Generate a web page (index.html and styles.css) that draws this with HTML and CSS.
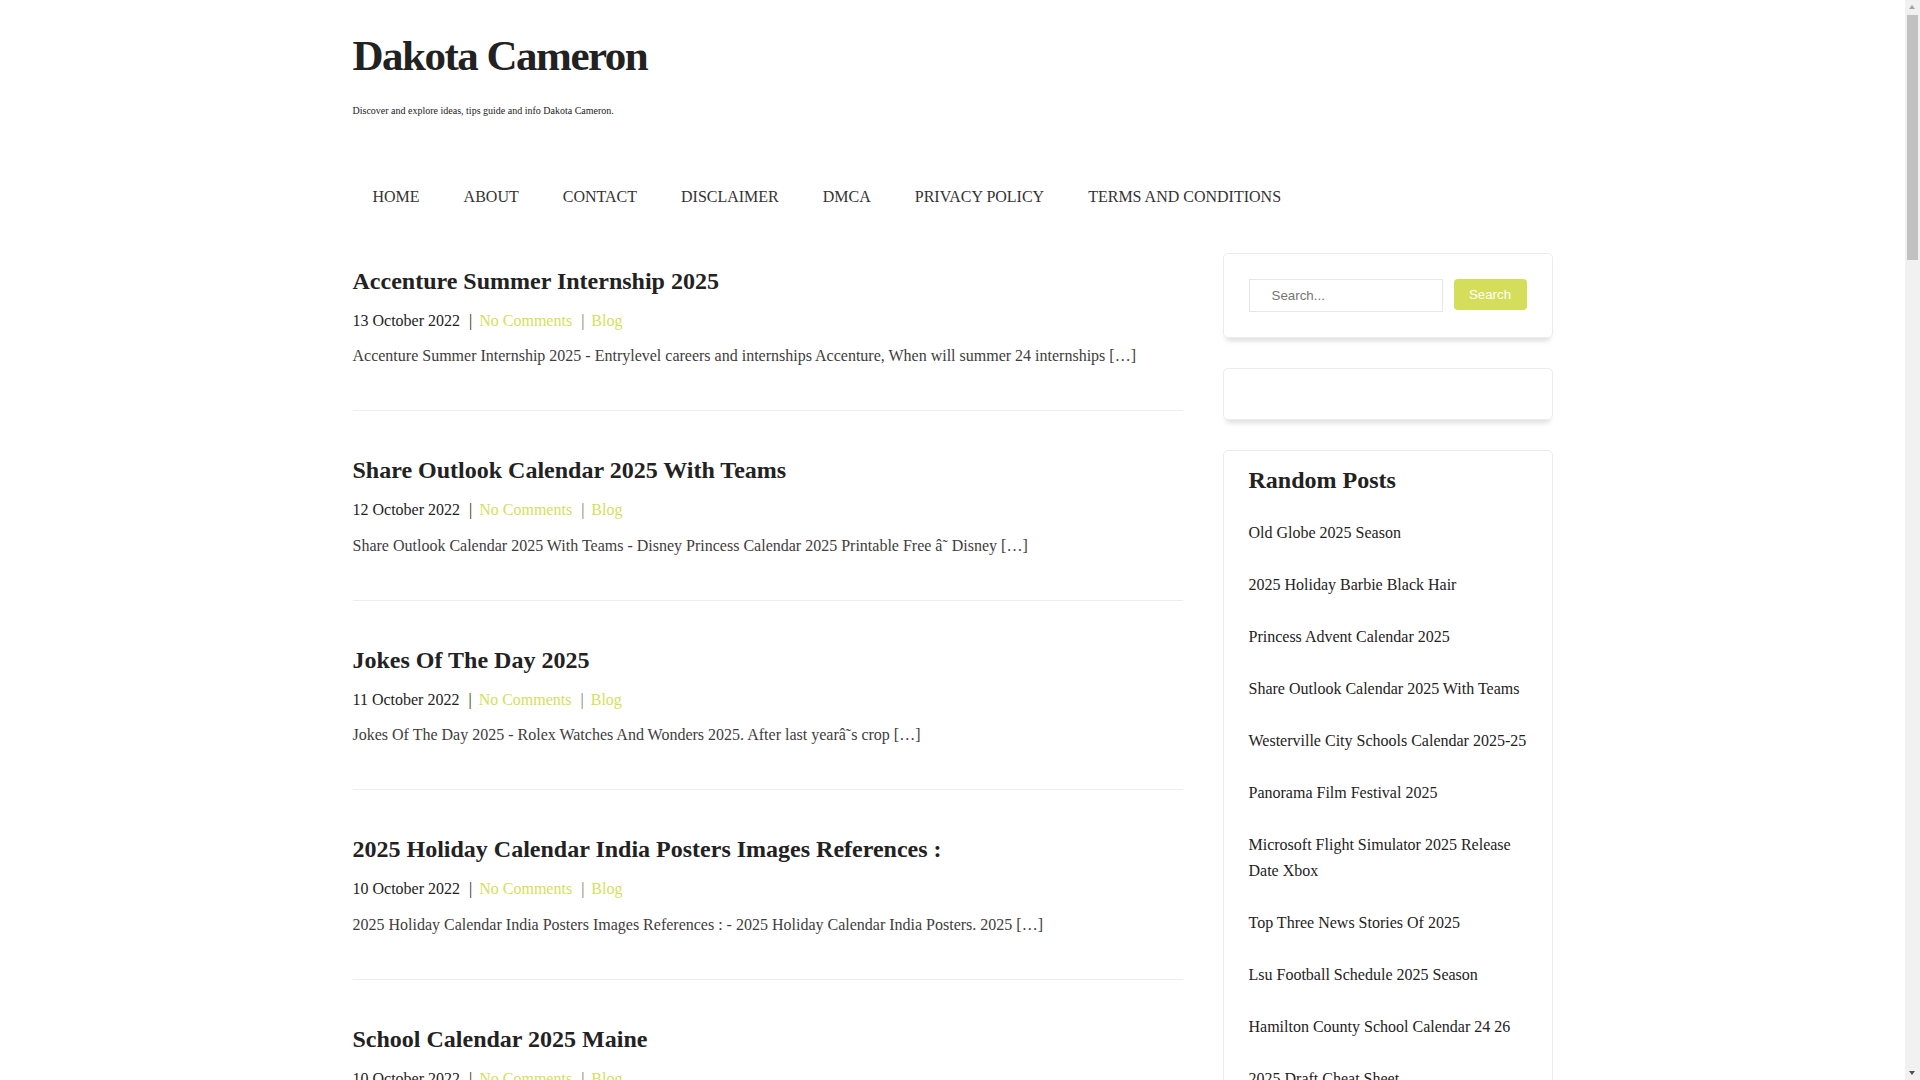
FILE: index.html
```html
<!doctype html>

<html lang="en">

<head>
  <meta charset="utf-8">
  <title>Dakota Cameron</title>
  <meta name="description" content="Discover and explore ideas, tips guide and info Dakota Cameron.">
  <link rel="stylesheet" href="styles.css">
</head>

<body>
  <div class="wrap">
    <header class="site-header">
      <h1 class="site-title">Dakota Cameron</h1>
      <p class="site-desc">Discover and explore ideas, tips guide and info Dakota Cameron.</p>
      <nav class="main-nav">
        <a href="#">HOME</a>
        <a href="#">ABOUT</a>
        <a href="#">CONTACT</a>
        <a href="#">DISCLAIMER</a>
        <a href="#">DMCA</a>
        <a href="#">PRIVACY POLICY</a>
        <a href="#">TERMS AND CONDITIONS</a>
      </nav>
    </header>

    <div class="content">
      <main class="posts">
        <article class="post">
          <h2 class="post-title">Accenture Summer Internship 2025</h2>
          <div class="post-meta">13 October 2022<span class="sep">|</span><a href="#">No Comments</a><span class="sep light">|</span><a href="#">Blog</a></div>
          <p class="excerpt">Accenture Summer Internship 2025 - Entrylevel careers and internships Accenture, When will summer 24 internships […]</p>
        </article>
        <article class="post">
          <h2 class="post-title">Share Outlook Calendar 2025 With Teams</h2>
          <div class="post-meta">12 October 2022<span class="sep">|</span><a href="#">No Comments</a><span class="sep light">|</span><a href="#">Blog</a></div>
          <p class="excerpt">Share Outlook Calendar 2025 With Teams - Disney Princess Calendar 2025 Printable Free â˜ Disney […]</p>
        </article>
        <article class="post">
          <h2 class="post-title">Jokes Of The Day 2025</h2>
          <div class="post-meta">11 October 2022<span class="sep">|</span><a href="#">No Comments</a><span class="sep light">|</span><a href="#">Blog</a></div>
          <p class="excerpt">Jokes Of The Day 2025 - Rolex Watches And Wonders 2025. After last yearâ˜s crop […]</p>
        </article>
        <article class="post">
          <h2 class="post-title">2025 Holiday Calendar India Posters Images References :</h2>
          <div class="post-meta">10 October 2022<span class="sep">|</span><a href="#">No Comments</a><span class="sep light">|</span><a href="#">Blog</a></div>
          <p class="excerpt">2025 Holiday Calendar India Posters Images References : - 2025 Holiday Calendar India Posters. 2025 […]</p>
        </article>
        <article class="post">
          <h2 class="post-title">School Calendar 2025 Maine</h2>
          <div class="post-meta">10 October 2022<span class="sep">|</span><a href="#">No Comments</a><span class="sep light">|</span><a href="#">Blog</a></div>
          <p class="excerpt">School Calendar 2025 Maine - Maine School Calendar 2025 and 2026 Holidays, dates and breaks […]</p>
        </article>
        <article class="post">
          <h2 class="post-title">Old Globe 2025 Season</h2>
          <div class="post-meta">9 October 2022<span class="sep">|</span><a href="#">No Comments</a><span class="sep light">|</span><a href="#">Blog</a></div>
          <p class="excerpt">Old Globe 2025 Season - The Old Globe announces full lineup for the new season […]</p>
        </article>
        <article class="post">
          <h2 class="post-title">2025 Holiday Barbie Black Hair</h2>
          <div class="post-meta">9 October 2022<span class="sep">|</span><a href="#">No Comments</a><span class="sep light">|</span><a href="#">Blog</a></div>
          <p class="excerpt">2025 Holiday Barbie Black Hair - Holiday Barbie Doll 2025, Red Dress. The collectible […]</p>
        </article>
        <article class="post">
          <h2 class="post-title">Princess Advent Calendar 2025</h2>
          <div class="post-meta">8 October 2022<span class="sep">|</span><a href="#">No Comments</a><span class="sep light">|</span><a href="#">Blog</a></div>
          <p class="excerpt">Princess Advent Calendar 2025 - Disney Princess Advent Calendar with 24 surprises […]</p>
        </article>
        <article class="post">
          <h2 class="post-title">Westerville City Schools Calendar 2025-25</h2>
          <div class="post-meta">8 October 2022<span class="sep">|</span><a href="#">No Comments</a><span class="sep light">|</span><a href="#">Blog</a></div>
          <p class="excerpt">Westerville City Schools Calendar 2025-25 - District calendar, first day of school and breaks […]</p>
        </article>
        <article class="post">
          <h2 class="post-title">Panorama Film Festival 2025</h2>
          <div class="post-meta">7 October 2022<span class="sep">|</span><a href="#">No Comments</a><span class="sep light">|</span><a href="#">Blog</a></div>
          <p class="excerpt">Panorama Film Festival 2025 - Program, venues and tickets for the festival week […]</p>
        </article>
        <article class="post">
          <h2 class="post-title">Microsoft Flight Simulator 2025 Release Date Xbox</h2>
          <div class="post-meta">7 October 2022<span class="sep">|</span><a href="#">No Comments</a><span class="sep light">|</span><a href="#">Blog</a></div>
          <p class="excerpt">Microsoft Flight Simulator 2025 Release Date Xbox - Everything we know so far about the launch […]</p>
        </article>
        <article class="post">
          <h2 class="post-title">Top Three News Stories Of 2025</h2>
          <div class="post-meta">6 October 2022<span class="sep">|</span><a href="#">No Comments</a><span class="sep light">|</span><a href="#">Blog</a></div>
          <p class="excerpt">Top Three News Stories Of 2025 - The biggest headlines of the year in review […]</p>
        </article>
        <article class="post">
          <h2 class="post-title">Lsu Football Schedule 2025 Season</h2>
          <div class="post-meta">6 October 2022<span class="sep">|</span><a href="#">No Comments</a><span class="sep light">|</span><a href="#">Blog</a></div>
          <p class="excerpt">Lsu Football Schedule 2025 Season - Tigers home and away games, kickoff times […]</p>
        </article>
        <article class="post">
          <h2 class="post-title">Hamilton County School Calendar 24 26</h2>
          <div class="post-meta">5 October 2022<span class="sep">|</span><a href="#">No Comments</a><span class="sep light">|</span><a href="#">Blog</a></div>
          <p class="excerpt">Hamilton County School Calendar 24 26 - Approved school year calendar and holidays […]</p>
        </article>
        <article class="post">
          <h2 class="post-title">2025 Draft Cheat Sheet</h2>
          <div class="post-meta">5 October 2022<span class="sep">|</span><a href="#">No Comments</a><span class="sep light">|</span><a href="#">Blog</a></div>
          <p class="excerpt">2025 Draft Cheat Sheet - Printable rankings by position for your fantasy draft […]</p>
        </article>
        <article class="post">
          <h2 class="post-title">Christmas Tree Lighting 2025</h2>
          <div class="post-meta">4 October 2022<span class="sep">|</span><a href="#">No Comments</a><span class="sep light">|</span><a href="#">Blog</a></div>
          <p class="excerpt">Christmas Tree Lighting 2025 - Dates and times of the tree lighting ceremonies […]</p>
        </article>
        <article class="post">
          <h2 class="post-title">Uk Bank Holidays 2025 Calendar</h2>
          <div class="post-meta">4 October 2022<span class="sep">|</span><a href="#">No Comments</a><span class="sep light">|</span><a href="#">Blog</a></div>
          <p class="excerpt">Uk Bank Holidays 2025 Calendar - England, Wales, Scotland and Northern Ireland […]</p>
        </article>
        <article class="post">
          <h2 class="post-title">Nfl Playoff Bracket 2025 Printable</h2>
          <div class="post-meta">3 October 2022<span class="sep">|</span><a href="#">No Comments</a><span class="sep light">|</span><a href="#">Blog</a></div>
          <p class="excerpt">Nfl Playoff Bracket 2025 Printable - Free printable bracket for the postseason […]</p>
        </article>
        <article class="post">
          <h2 class="post-title">Chinese New Year 2025 Animal</h2>
          <div class="post-meta">3 October 2022<span class="sep">|</span><a href="#">No Comments</a><span class="sep light">|</span><a href="#">Blog</a></div>
          <p class="excerpt">Chinese New Year 2025 Animal - Year of the Snake meaning and traditions […]</p>
        </article>
        <article class="post">
          <h2 class="post-title">Ramadan 2025 Calendar Usa</h2>
          <div class="post-meta">2 October 2022<span class="sep">|</span><a href="#">No Comments</a><span class="sep light">|</span><a href="#">Blog</a></div>
          <p class="excerpt">Ramadan 2025 Calendar Usa - Sehri and iftar timings for major cities […]</p>
        </article>
        <div class="pager"><a href="#">Next Page »</a></div>
      </main>

      <aside class="sidebar">
        <div class="widget">
          <form class="search-form">
            <input type="search" placeholder="Search...">
            <button type="button">Search</button>
          </form>
        </div>
        <div class="widget"></div>
        <div class="widget random">
          <h3 class="widget-title">Random Posts</h3>
          <ul class="random-list">
            <li><a href="#">Old Globe 2025 Season</a></li>
            <li><a href="#">2025 Holiday Barbie Black Hair</a></li>
            <li><a href="#">Princess Advent Calendar 2025</a></li>
            <li><a href="#">Share Outlook Calendar 2025 With Teams</a></li>
            <li><a href="#">Westerville City Schools Calendar 2025-25</a></li>
            <li><a href="#">Panorama Film Festival 2025</a></li>
            <li><a href="#">Microsoft Flight Simulator 2025 Release Date Xbox</a></li>
            <li><a href="#">Top Three News Stories Of 2025</a></li>
            <li><a href="#">Lsu Football Schedule 2025 Season</a></li>
            <li><a href="#">Hamilton County School Calendar 24 26</a></li>
            <li><a href="#">2025 Draft Cheat Sheet</a></li>
            <li><a href="#">Christmas Tree Lighting 2025</a></li>
            <li><a href="#">Uk Bank Holidays 2025 Calendar</a></li>
            <li><a href="#">Nfl Playoff Bracket 2025 Printable</a></li>
            <li><a href="#">Chinese New Year 2025 Animal</a></li>
          </ul>
        </div>
      </aside>
    </div>

    <footer class="site-footer">Copyright © 2022 Dakota Cameron. All rights reserved.</footer>
  </div>

  <!-- window scrollbar as seen in the capture -->
  <div class="fake-scroll">
    <span class="arrow up"></span>
    <span class="thumb"></span>
    <span class="arrow down"></span>
  </div>
</body>

</html>
```

FILE: styles.css
```css
body {
  margin: 0;
  padding-right: 15px;
  background: #fff;
  color: #222;
  font-family: "Liberation Serif", "Times New Roman", serif;
  font-size: 16px;
}
a {
  color: inherit;
  text-decoration: none;
}
.wrap {
  width: 1200px;
  margin: 0 auto;
}

/* header */
.site-header {
  padding-top: 30px;
}
.site-title {
  margin: 0;
  font-size: 43px;
  line-height: 1.2;
  letter-spacing: -1.5px;
  font-weight: bold;
  color: #222;
}
.site-desc {
  margin: 21px 0 0;
  font-size: 10px;
  line-height: 15px;
}
.main-nav {
  display: flex;
  gap: 4px;
  margin-top: 67px;
  line-height: 24px;
}
.main-nav a {
  padding: 0 20px;
  color: #333;
}

/* layout */
.content {
  display: grid;
  grid-template-columns: 830px 330px;
  gap: 40px;
  align-items: start;
  margin-top: 44px;
}

/* posts */
.posts {
  padding-top: 10px;
}
.post {
  padding-bottom: 42px;
  margin-bottom: 41px;
  border-bottom: 1px solid #ededed;
}
.post-title {
  margin: 0 0 10px;
  font-size: 24px;
  line-height: 36px;
  font-weight: bold;
  color: #222;
}
.post-meta {
  line-height: 24px;
  margin-bottom: 11.5px;
  color: #222;
}
.post-meta a {
  color: #d3df5c;
}
.post-meta .sep {
  margin: 0 7px 0 9px;
}
.post-meta .sep.light {
  color: #777;
}
.excerpt {
  margin: 0;
  line-height: 24px;
  color: #3d3d3d;
}
.pager {
  padding-bottom: 40px;
}
.pager a {
  color: #d3df5c;
}

/* sidebar */
.widget {
  border: 1px solid #ececec;
  border-radius: 5px;
  padding: 25px;
  margin-bottom: 30px;
  background: #fff;
  box-shadow: 0 6px 5px -3px rgba(0, 0, 0, 0.13);
}
.widget.random {
  padding-top: 15px;
}
.search-form {
  display: flex;
  gap: 11px;
  align-items: flex-start;
}
.search-form input {
  flex: 1;
  min-width: 0;
  box-sizing: border-box;
  height: 33px;
  padding: 0 22px;
  border: 1px solid #e6e6e6;
  font-family: "Liberation Sans", Arial, sans-serif;
  font-size: 13.33px;
  color: #333;
  outline: none;
}
.search-form input::placeholder {
  color: #757575;
}
.search-form button {
  width: 73px;
  height: 31px;
  border: none;
  border-radius: 4px;
  background: #d4de5a;
  color: #fff;
  font-family: "Liberation Sans", Arial, sans-serif;
  font-size: 13.33px;
}
.widget-title {
  margin: 0 0 13px;
  font-size: 24px;
  line-height: 1.2;
  font-weight: bold;
  color: #222;
}
.random-list {
  list-style: none;
  margin: 0;
  padding: 0;
}
.random-list li {
  padding: 13px 0;
  line-height: 26px;
}

.site-footer {
  padding: 30px 0 40px;
  border-top: 1px solid #ededed;
  font-size: 14px;
  color: #555;
}

/* scrollbar overlay */
.fake-scroll {
  position: fixed;
  top: 0;
  right: 0;
  width: 15px;
  height: 100vh;
  background: #f1f1f1;
}
.fake-scroll .thumb {
  position: absolute;
  top: 15px;
  left: 2px;
  width: 11px;
  height: 245px;
  background: #c1c1c1;
}
.fake-scroll .arrow {
  position: absolute;
  left: 4px;
  width: 0;
  height: 0;
  border-left: 3.5px solid transparent;
  border-right: 3.5px solid transparent;
}
.fake-scroll .arrow.up {
  top: 5px;
  border-bottom: 4px solid #a3a3a3;
}
.fake-scroll .arrow.down {
  bottom: 5px;
  border-top: 4px solid #505050;
}
```
